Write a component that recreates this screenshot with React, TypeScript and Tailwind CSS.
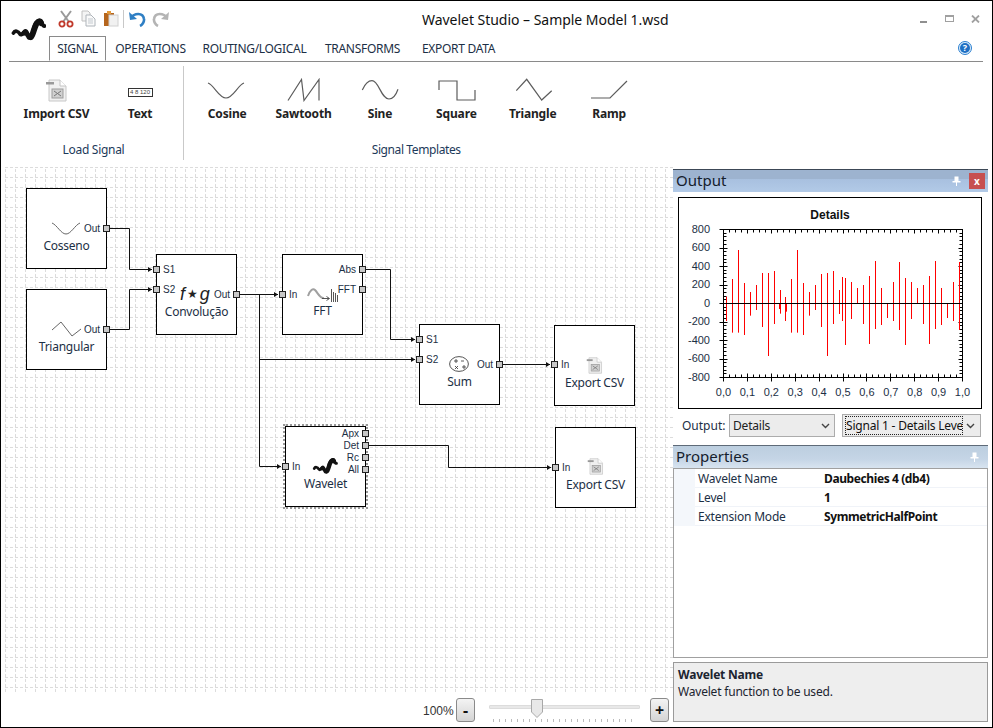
import type { ReactNode } from "react";

const tabs = [
  { label: "SIGNAL", width: "w-[57px]", active: true },
  { label: "OPERATIONS", width: "w-[89px]" },
  { label: "ROUTING/LOGICAL", width: "w-[119px]" },
  { label: "TRANSFORMS", width: "w-[97px]" },
  { label: "EXPORT DATA", width: "w-[95px]" },
];

const templates = [
  { label: "Cosine", d: "M2 5 C8 7 13 20 20 20 C27 20 32 7 38 5" },
  { label: "Sawtooth", d: "M5 22.5 L18.5 1.5 L21 22.5 L36 1.5 V22.5" },
  { label: "Sine", d: "M3.3 12 C6 6 9 2.7 13 2.7 C20 2.7 22 21 30 21 C34 21 37 17 39 11.3" },
  { label: "Square", d: "M4 12 V3 H22 V22 H40 V12" },
  { label: "Triangle", d: "M4.3 12.7 L14.7 1.3 L29.7 22 L39.7 12.7" },
  { label: "Ramp", d: "M3 20 H22 L39 3" },
];

// bars read off the plot: x, top, bottom, all in 3x crop coordinates
const bars = [
  [154, 305, 378], [172, 252, 413], [190, 165, 413], [208, 264, 420], [226, 291, 362], [244, 270, 345],
  [262, 234, 396], [280, 234, 483], [298, 228, 387], [313, 325, 342], [316, 285, 356], [331, 306, 378],
  [334, 325, 350], [349, 252, 413], [367, 165, 413], [385, 264, 420], [403, 291, 362], [421, 270, 345],
  [439, 237, 396], [457, 234, 483], [475, 228, 387], [493, 285, 357], [502, 246, 378], [511, 249, 450],
  [529, 261, 372], [547, 279, 325], [565, 270, 387], [583, 243, 447], [601, 198, 402], [619, 279, 390],
  [637, 325, 369], [655, 261, 378], [673, 201, 405], [691, 249, 450], [709, 261, 372], [727, 279, 325],
  [745, 270, 387], [763, 243, 447], [781, 198, 402], [799, 279, 390], [817, 325, 369], [835, 261, 378],
  [853, 201, 405],
];

const wires = [
  "M110 228.5 H129.5 V269.5 H152",
  "M110 329.5 H129.5 V289.5 H152",
  "M240 294.5 H278",
  "M259.5 294.5 V466.5 H281",
  "M259.5 359.5 H415",
  "M366 269.5 H390.5 V339.5 H415",
  "M503 364.5 H550",
  "M369 445.5 H448.5 V467.5 H551",
];

const arrows = [
  [152, 269.5], [152, 289.5], [278, 294.5], [281, 466.5], [415, 359.5], [415, 339.5], [550, 364.5], [551, 467.5],
];

function Logo({ className }: { className: string }) {
  return (
    <svg viewBox="11 17 35 25" className={className}>
      <path
        d="M13.5 33 C15 30 18 31 20 34 C21.5 36 23 33 25 31 C27 29.5 28 38 30 38 C33 38 33 26 36 23 C38 20 41 19 42 23 C42.5 25 43.5 26 44.5 26"
        fill="none"
        stroke="#111"
        strokeWidth="3.8"
        strokeLinecap="round"
      />
      <path d="M31 37 C33 36 34 27 37 23 C39 21 40 21 41 23" fill="none" stroke="#111" strokeWidth="6" strokeLinecap="round" />
      <path d="M24 33 C26 31 27 34 29 37" fill="none" stroke="#111" strokeWidth="5" strokeLinecap="round" />
    </svg>
  );
}

function DocIcon({ className }: { className: string }) {
  return (
    <svg viewBox="0 0 21 23" className={className}>
      <path d="M3 1 H14 L20 7 V22 H3 Z" fill="#f0f0f0" stroke="#c8c8c8" />
      <path d="M14 1 V7 H20" fill="#fff" stroke="#c4c4c4" />
      <rect x="0" y="3" width="8" height="2.5" fill="#999" />
      <rect x="6" y="10" width="11" height="9" fill="#d0d0d0" stroke="#9c9c9c" />
      <path d="M8 12 L15 17 M15 12 L8 17" stroke="#777" />
    </svg>
  );
}

function QuickAccess() {
  return (
    <div className="flex h-[18px] items-center pl-[9px]">
      <svg viewBox="0 0 16 18" className="h-[18px] w-[16px]">
        <path d="M3 1 L11 12 M13 1 L5 12" stroke="#9a9a9a" strokeWidth="2" />
        <circle cx="4" cy="14" r="2.6" fill="none" stroke="#c0392b" strokeWidth="1.8" />
        <circle cx="12" cy="14" r="2.6" fill="none" stroke="#c0392b" strokeWidth="1.8" />
      </svg>
      <svg viewBox="0 0 15 17" className="ml-[7px] h-[17px] w-[15px]">
        <path d="M1 1 H7 L9 3 V11 H1 Z" fill="#f4f4f4" stroke="#c0c0c0" />
        <path d="M5 5 H10 L14 9 V16 H5 Z" fill="#fafafa" stroke="#aeb4ba" />
        <path d="M7 9 H12 M7 11 H12 M7 13 H12" stroke="#c3c9cf" />
      </svg>
      <svg viewBox="0 0 16 17" className="ml-[7px] h-[17px] w-[16px]">
        <rect x="1" y="3" width="10" height="13" fill="#b5651d" />
        <rect x="4" y="1" width="4" height="3" fill="#e39a3b" />
        <rect x="6" y="5" width="9" height="11" fill="#f1f1f1" stroke="#d0d0d0" />
      </svg>
      <div className="ml-[4px] h-[18px] w-px bg-[#c8c8c8]" />
      <svg viewBox="0 0 18 16" className="ml-[5px] h-[16px] w-[18px]">
        <path d="M2 7 C5 2 14 1 15 8 C15.5 11 13 14 11 15" fill="none" stroke="#2f7fc4" strokeWidth="2.6" />
        <path d="M0 1 L1 9 L8 8 Z" fill="#2f7fc4" />
      </svg>
      <svg viewBox="0 0 18 16" className="ml-[4px] h-[16px] w-[18px]">
        <path d="M16 7 C13 2 4 1 3 8 C2.5 11 5 14 7 15" fill="none" stroke="#b4b4b4" strokeWidth="2.6" />
        <path d="M18 1 L17 9 L10 8 Z" fill="#b4b4b4" />
      </svg>
    </div>
  );
}

function WindowControls() {
  return (
    <div className="ml-auto mr-[3px] flex items-center">
      <div className="mt-[7px] h-[2px] w-[7px] bg-[#8f8f8f]" />
      <div className="ml-[18px] h-[7px] w-[9px] border border-t-2 border-[#a0a0a0]" />
      <svg viewBox="0 0 9 8" className="ml-[17px] h-[8px] w-[9px]">
        <path d="M1 0.5 L8 7.5 M8 0.5 L1 7.5" stroke="#a0a0a0" strokeWidth="1.8" />
      </svg>
    </div>
  );
}

function HelpIcon() {
  return (
    <div className="mb-[2px] ml-auto mr-[11px] flex h-[14px] w-[14px] items-center justify-center rounded-full border border-[#2a7fd0] bg-[#dcecfa]">
      <div className="flex h-[10px] w-[10px] items-center justify-center rounded-full bg-[#1f70c4] text-[9px] font-bold leading-none text-white">
        ?
      </div>
    </div>
  );
}

function RibbonButton({ label, width, children }: { label: string; width: string; children: ReactNode }) {
  return (
    <div className={`flex shrink-0 flex-col items-center pt-[16px] ${width}`}>
      <div className="flex h-[24px] items-center justify-center">{children}</div>
      <div className="mt-[4px] whitespace-nowrap text-[12px] font-bold leading-[16px] tracking-[-0.15px] text-[#222]">{label}</div>
    </div>
  );
}

function Ribbon() {
  return (
    <div className="flex h-[105px] pl-[9px]">
      <div className="w-[173px] shrink-0">
        <div className="flex h-[80px]">
          <RibbonButton label="Import CSV" width="w-[93px]">
            <DocIcon className="h-[23px] w-[21px]" />
          </RibbonButton>
          <RibbonButton label="Text" width="w-[74px]">
            <div className="mt-[4px] flex h-[9px] w-[25px] items-center justify-center overflow-hidden whitespace-nowrap border border-[#333] font-['Liberation_Sans',sans-serif] text-[6px] leading-none text-[#444]">
              4 8 120
            </div>
          </RibbonButton>
        </div>
        <div className="pr-[6px] text-center text-[12px] leading-[16px] tracking-[-0.3px] text-[#1c3a5a]">Load Signal</div>
      </div>
      <div className="mt-[4px] h-[94px] w-px shrink-0 bg-[#c9c9c9]" />
      <div className="pl-[5px]">
        <div className="flex h-[80px]">
          {templates.map((t) => (
            <RibbonButton key={t.label} label={t.label} width="w-[76.4px]">
              <svg viewBox="0 0 42 24" className="h-[24px] w-[42px]">
                <path d={t.d} fill="none" stroke="#5c5c5c" strokeWidth="1.2" />
              </svg>
            </RibbonButton>
          ))}
        </div>
        <div className="pr-[4px] text-center text-[12px] leading-[16px] tracking-[-0.4px] text-[#1c3a5a]">Signal Templates</div>
      </div>
    </div>
  );
}

type PortDef = { label: string; side: "l" | "r"; y: number };

function Block({
  x,
  y,
  title,
  titleY,
  ports,
  selected,
  children,
}: {
  x: number;
  y: number;
  title: string;
  titleY: number;
  ports: PortDef[];
  selected?: boolean;
  children?: ReactNode;
}) {
  return (
    <div
      className="absolute h-[81px] w-[81px] border border-black bg-white text-[#1c2f45]"
      style={{ left: x - 1, top: y - 167 }}
    >
      {selected && <div className="absolute -inset-[3px] border-2 border-dotted border-[#999]" />}
      {children}
      <div
        className="absolute inset-x-0 text-center text-[12px] leading-[16px] tracking-[-0.25px]"
        style={{ top: titleY - y - 9 }}
      >
        {title}
      </div>
      {ports.map((p) => (
        <div key={p.label} style={{ top: p.y - y - 5 }} className="absolute inset-x-0 h-[8px]">
          <div
            className={
              p.side === "l"
                ? "absolute -left-[4px] top-[0.5px] h-[7px] w-[7px] border border-[#222] bg-[#c8c8c8]"
                : "absolute -right-[4px] top-[0.5px] h-[7px] w-[7px] border border-[#222] bg-[#c8c8c8]"
            }
          />
          <div
            className={
              p.side === "l"
                ? "absolute left-[6px] top-[-2px] font-['Liberation_Sans',sans-serif] text-[10px] leading-[14px]"
                : "absolute right-[6px] top-[-2px] font-['Liberation_Sans',sans-serif] text-[10px] leading-[14px]"
            }
          >
            {p.label}
          </div>
        </div>
      ))}
    </div>
  );
}

function Canvas() {
  return (
    <div className="relative h-[526px] overflow-hidden bg-white">
      <svg className="absolute inset-0 h-full w-full" viewBox="1 167 672 526">
        <defs>
          <pattern id="grid" x="5" y="167" width="10" height="10" patternUnits="userSpaceOnUse">
            <path d="M0 0.5 H3 M5 0.5 H8 M0.5 2 V5 M0.5 7 V10" stroke="#dcdcdc" strokeWidth="1" />
          </pattern>
        </defs>
        <rect x="5" y="167" width="668" height="526" fill="url(#grid)" />
      </svg>

      <Block x={26} y={188} title="Cosseno" titleY={246} ports={[{ label: "Out", side: "r", y: 228 }]}>
        <svg viewBox="0 0 30 14" className="absolute left-[24px] top-[33px] h-[14px] w-[30px]">
          <path d="M1 1 C6 3 10 12 15 12 C20 12 24 3 29 1" fill="none" stroke="#666" />
        </svg>
      </Block>
      <Block x={26} y={289} title="Triangular" titleY={347} ports={[{ label: "Out", side: "r", y: 329 }]}>
        <svg viewBox="0 0 30 16" className="absolute left-[24px] top-[31px] h-[16px] w-[30px]">
          <path d="M1 9 L10 1 L21 15 L30 8" fill="none" stroke="#666" />
        </svg>
      </Block>
      <Block
        x={156}
        y={254}
        title="Convolução"
        titleY={312}
        ports={[
          { label: "S1", side: "l", y: 269 },
          { label: "S2", side: "l", y: 289 },
          { label: "Out", side: "r", y: 294 },
        ]}
      >
        <div className="absolute left-[23px] top-[30px] flex items-center gap-[2px] font-['Liberation_Sans',sans-serif] text-[18px] italic leading-[18px] text-[#222]">
          <span>f</span>
          <span className="font-['DejaVu_Sans',sans-serif] text-[12px] not-italic">★</span>
          <span>g</span>
        </div>
      </Block>
      <Block
        x={282}
        y={254}
        title="FFT"
        titleY={311}
        ports={[
          { label: "In", side: "l", y: 294 },
          { label: "Abs", side: "r", y: 269 },
          { label: "FFT", side: "r", y: 289 },
        ]}
      >
        <svg viewBox="0 0 31 16" className="absolute left-[24px] top-[32px] h-[16px] w-[31px]">
          <path d="M1 9 C3 3 6 1 8 3 C11 6 13 12 17 11" fill="none" stroke="#a0a0a0" strokeWidth="2" />
          <path d="M15 11.5 H22 M19.5 9.5 L22.5 11.5 L19.5 13.5" fill="none" stroke="#444" strokeWidth="0.9" />
          <path d="M24.5 2 V15 M26.5 5 V15 M28.5 6 V15 M30.5 8 V15" stroke="#444" strokeWidth="0.9" />
        </svg>
      </Block>
      <Block
        x={419}
        y={324}
        title="Sum"
        titleY={382}
        ports={[
          { label: "S1", side: "l", y: 339 },
          { label: "S2", side: "l", y: 359 },
          { label: "Out", side: "r", y: 364 },
        ]}
      >
        <svg viewBox="0 0 20 16" className="absolute left-[29px] top-[31px] h-[16px] w-[20px]">
          <ellipse cx="10" cy="8" rx="9.4" ry="7.4" fill="#fff" stroke="#555" />
          <path d="M5 5 H9 M7 3 V7 M12 5 H15 M13 11 H17 M15 9 V13 M6 10 L9 13 M9 10 L6 13" stroke="#333" strokeWidth="0.8" />
        </svg>
      </Block>
      <Block x={554} y={325} title="Export CSV" titleY={383} ports={[{ label: "In", side: "l", y: 364 }]}>
        <DocIcon className="absolute left-[31px] top-[31px] h-[17px] w-[17px]" />
      </Block>
      <Block
        x={285}
        y={426}
        title="Wavelet"
        titleY={484}
        selected
        ports={[
          { label: "In", side: "l", y: 466 },
          { label: "Apx", side: "r", y: 433 },
          { label: "Det", side: "r", y: 445 },
          { label: "Rc", side: "r", y: 457 },
          { label: "All", side: "r", y: 469 },
        ]}
      >
        <Logo className="absolute left-[26px] top-[30px] h-[18px] w-[26px]" />
      </Block>
      <Block x={555} y={427} title="Export CSV" titleY={485} ports={[{ label: "In", side: "l", y: 467 }]}>
        <DocIcon className="absolute left-[31px] top-[30px] h-[17px] w-[17px]" />
      </Block>

      <svg className="pointer-events-none absolute inset-0 h-full w-full" viewBox="1 167 672 526">
        {wires.map((d) => (
          <path key={d} d={d} fill="none" stroke="#111" strokeWidth="1" />
        ))}
        {arrows.map(([x, y]) => (
          <path key={`${x}-${y}`} d={`M${x - 4} ${y - 2.5} L${x} ${y} L${x - 4} ${y + 2.5} Z`} fill="#111" />
        ))}
      </svg>
    </div>
  );
}

function ZoomButton({ label }: { label: string }) {
  return (
    <div className="flex h-[24px] w-[19px] items-center justify-center rounded-[3px] border border-[#8a8a8a] bg-gradient-to-b from-[#f4f4f4] to-[#d4d4d4] text-[16px] font-bold leading-none text-[#111]">
      {label}
    </div>
  );
}

function ZoomBar() {
  return (
    <div className="flex h-[33px] items-start bg-white pl-[422px] pt-[5px]">
      <div className="mt-[6px] w-[30px] font-['Liberation_Sans',sans-serif] text-[12px] leading-[14px] text-[#333]">100%</div>
      <div className="ml-[3px]">
        <ZoomButton label="-" />
      </div>
      <div className="ml-[14px] flex w-[151px] flex-col">
        <div className="relative mt-[7px] h-[4px] rounded-[1px] border border-[#dcdcdc] bg-[#e8e8e8]">
          <svg viewBox="0 0 12 19" className="absolute left-[41px] -top-[7px] h-[19px] w-[12px]">
            <path d="M0.5 0.5 H11.5 V13 L6 18.5 L0.5 13 Z" fill="#e8e8e8" stroke="#a8a8a8" />
          </svg>
        </div>
        <div className="ml-[4px] mt-[10px] h-[3px] w-[140px] bg-[repeating-linear-gradient(90deg,#bbb_0,#bbb_1px,transparent_1px,transparent_6px)]" />
      </div>
      <div className="ml-[10px]">
        <ZoomButton label="+" />
      </div>
    </div>
  );
}

function Chart() {
  const px = (z: number) => 675 + z / 3;
  const py = (z: number) => 195 + z / 3;
  const left = 723.5;
  const right = 962.5;
  const top = 229.5;
  const bottom = 377.5;
  const yTicks = Array.from({ length: 41 }, (_, i) => i);
  const xTicks = Array.from({ length: 41 }, (_, i) => i);
  return (
    <svg viewBox="679 198 302 210" className="block h-full w-full font-['Liberation_Sans',sans-serif]">
      <text x="830" y="219" textAnchor="middle" fontSize="12" fontWeight="700" fill="#111">
        Details
      </text>
      <rect x={left} y={top} width={right - left} height={bottom - top} fill="#fff" stroke="#000" />
      {xTicks.map((i) => {
        const x = Math.round(left + (i * (right - left)) / 40 - 0.5) + 0.5;
        const major = i % 4 === 0;
        return (
          <g key={`x${i}`} stroke="#000">
            <path d={`M${x} ${bottom - (major ? 4 : 3)} V${bottom + (major ? 4 : 0)}`} />
            <path d={`M${x} ${top} V${top + (major ? 4 : 3)}`} />
          </g>
        );
      })}
      {yTicks.map((i) => {
        const y = Math.round(top + (i * (bottom - top)) / 40 - 0.5) + 0.5;
        const major = i % 5 === 0;
        return (
          <g key={`y${i}`} stroke="#000">
            <path d={`M${left - (major ? 4 : 0)} ${y} H${left + (major ? 4 : 3)}`} />
            <path d={`M${right - (major ? 4 : 3)} ${y} H${right}`} />
          </g>
        );
      })}
      {bars.map(([x, a, b]) => (
        <path key={`${x}`} d={`M${Math.round(px(x)) + 0.5} ${py(a)} V${py(b)}`} stroke="#f00" strokeWidth="1" />
      ))}
      <path d={`M${left} 303.5 H${right}`} stroke="#000" strokeWidth="1" />
      {[800, 600, 400, 200, 0, -200, -400, -600, -800].map((v, i) => (
        <text key={v} x="710" y={top + (i * (bottom - top)) / 8 + 3} textAnchor="end" fontSize="11" fill="#1c2f45">
          {v}
        </text>
      ))}
      {Array.from({ length: 11 }, (_, i) => i).map((i) => (
        <text key={i} x={left + (i * (right - left)) / 10} y="396" textAnchor="middle" fontSize="11" fill="#1c2f45">
          {`${Math.floor(i / 10)},${i % 10}`}
        </text>
      ))}
    </svg>
  );
}

function Chevron() {
  return (
    <svg viewBox="0 0 9 6" className="h-[6px] w-[9px]">
      <path d="M1 1 L4.5 4.5 L8 1" fill="none" stroke="#444" strokeWidth="1.4" />
    </svg>
  );
}

function PinIcon() {
  return (
    <svg viewBox="0 0 9 10" className="h-[10px] w-[9px]">
      <path d="M2.5 0.5 H6.5 V5 H8.5 V6.5 H0.5 V5 H2.5 Z M4 6.5 H5 V10 H4 Z" fill="#fff" />
    </svg>
  );
}

function OutputPanel() {
  return (
    <>
      <div className="flex h-[23px] items-center border-t border-[#3c4856] bg-[linear-gradient(#9db3cf_0,#9db3cf_40%,#a8c0df_40%,#b2cae7_100%)] pl-[3px] pr-[3px]">
        <span className="-mt-[2px] text-[15px] leading-[20px] text-[#15202c]">Output</span>
        <div className="ml-auto mr-[8px]">
          <PinIcon />
        </div>
        <div className="flex h-[16px] w-[16px] items-center justify-center bg-[#c75050] text-[10px] font-bold leading-none text-white">
          x
        </div>
      </div>
      <div className="ml-[5px] mt-[5px] h-[212px] w-[304px] border border-black bg-white">
        <Chart />
      </div>
      <div className="mt-[5px] flex h-[23px] items-center">
        <span className="ml-[9px] w-[47px] text-[12px] leading-[16px] text-[#1c2f45]">Output:</span>
        <div className="flex h-[23px] w-[106px] items-center justify-between border border-[#acacac] bg-[#ececec] pl-[3px] pr-[4px] text-[12px] tracking-[-0.2px] text-[#222]">
          Details
          <Chevron />
        </div>
        <div className="ml-[7px] flex h-[23px] w-[139px] items-center justify-between border border-[#acacac] bg-[#ececec] pl-[2px] pr-[5px] text-[12px] text-[#111]">
          <div className="h-[19px] w-[118px] overflow-hidden whitespace-nowrap border border-dotted border-[#222] leading-[17px] tracking-[-0.2px]">
            Signal 1 - Details Level 1
          </div>
          <Chevron />
        </div>
      </div>
    </>
  );
}

function PropertyRow({ name, value }: { name: string; value: string }) {
  return (
    <div className="flex h-[19px] items-center text-[12px] leading-[16px]">
      <div className="h-full w-[21px] shrink-0 bg-[#f4f7fb]" />
      <div className="flex h-full w-[125px] shrink-0 items-center border-b border-[#f0f3f8] pl-[3px] pt-[2px] tracking-[-0.2px] text-[#1c2f45]">{name}</div>
      <div className="flex h-full flex-1 items-center border-b border-[#f0f3f8] pl-[4px] pt-[2px] font-bold tracking-[-0.4px] text-[#111]">{value}</div>
    </div>
  );
}

function PropertiesPanel() {
  return (
    <>
      <div className="mt-[8px] flex h-[23px] items-center border-t border-[#5e6a78] bg-[linear-gradient(#bccedf_0,#c5d5e6_60%,#d8e4f0_100%)] pl-[3px] pr-[9px]">
        <span className="-mt-[2px] text-[15px] leading-[20px] text-[#15202c]">Properties</span>
        <div className="ml-auto">
          <PinIcon />
        </div>
      </div>
      <div className="h-[190px] border border-[#a0a0a0] bg-white">
        <PropertyRow name="Wavelet Name" value="Daubechies 4 (db4)" />
        <PropertyRow name="Level" value="1" />
        <PropertyRow name="Extension Mode" value="SymmetricHalfPoint" />
      </div>
      <div className="mt-[4px] h-[60px] border border-[#9a9a9a] bg-[#eeeeee] px-[4px] pt-[3px] text-[12px] leading-[17px] tracking-[-0.2px] text-[#1c2430]">
        <div className="font-bold">Wavelet Name</div>
        <div>Wavelet function to be used.</div>
      </div>
    </>
  );
}

export default function App() {
  return (
    <div className="flex h-[728px] w-[993px] flex-col overflow-hidden border border-black bg-white font-['Noto_Sans','Open_Sans',sans-serif]">
      <div className="ml-[8px] mr-[9px] flex h-[61px] border-b border-[#8a8a8a]">
        <div className="w-[40px] shrink-0 pl-[2px] pt-[16px]">
          <Logo className="h-[25px] w-[35px]" />
        </div>
        <div className="flex min-w-0 flex-1 flex-col">
          <div className="flex h-[36px] items-center">
            <div className="w-[373px] shrink-0">
              <QuickAccess />
            </div>
            <span className="mt-[2px] whitespace-nowrap text-[14px] leading-[20px] tracking-[-0.03px] text-[#111]">
              Wavelet Studio – Sample Model 1.wsd
            </span>
            <WindowControls />
          </div>
          <div className="flex h-[25px] items-center">
            {tabs.map((t) => (
              <div
                key={t.label}
                className={
                  t.active
                    ? `${t.width} flex h-[25px] items-center justify-center border border-[#8a8a8a] border-b-white bg-white text-[12px] tracking-[-0.3px] text-[#1c2f45]`
                    : `${t.width} flex h-[25px] items-center justify-center text-[12px] tracking-[-0.3px] text-[#1c2f45]`
                }
              >
                {t.label}
              </div>
            ))}
            <HelpIcon />
          </div>
        </div>
      </div>
      <Ribbon />
      <div className="flex min-h-0 flex-1">
        <div className="w-[672px] shrink-0">
          <Canvas />
          <ZoomBar />
        </div>
        <div className="w-[315px] shrink-0 pt-[2px]">
          <OutputPanel />
          <PropertiesPanel />
        </div>
      </div>
    </div>
  );
}
